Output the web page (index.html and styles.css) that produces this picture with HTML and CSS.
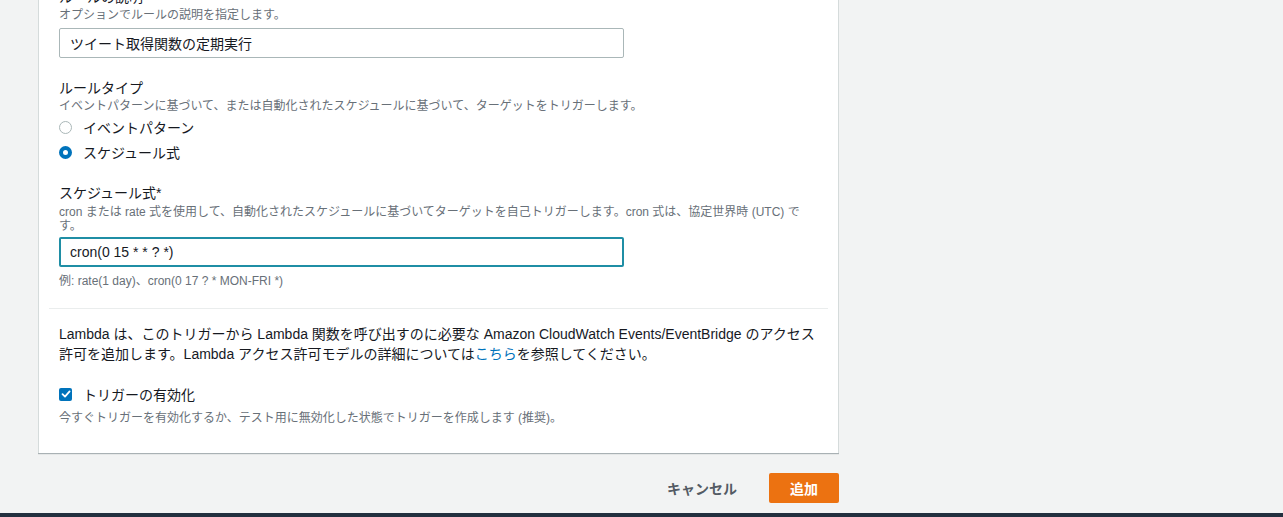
FILE: index.html
```html
<!DOCTYPE html>
<html lang="ja">
<head>
    <meta charset="UTF-8">
    <title>トリガーを追加</title>
    <link rel="stylesheet" href="styles.css">
</head>
<body>

<div class="page">
    <div class="card">
        <!-- rule settings -->
        <div class="section">
            <div class="field">
                <div class="label">ルールの説明</div>
                <div class="desc">オプションでルールの説明を指定します。</div>
                <input class="text-input" type="text" value="ツイート取得関数の定期実行">
            </div>

            <div class="field">
                <div class="label">ルールタイプ</div>
                <div class="desc">イベントパターンに基づいて、または自動化されたスケジュールに基づいて、ターゲットをトリガーします。</div>
                <div class="radio-row">
                    <span class="radio"></span>
                    <span>イベントパターン</span>
                </div>
                <div class="radio-row">
                    <span class="radio checked"></span>
                    <span>スケジュール式</span>
                </div>
            </div>

            <div class="field field-schedule">
                <div class="label">スケジュール式*</div>
                <div class="desc desc-tight">cron または rate 式を使用して、自動化されたスケジュールに基づいてターゲットを自己トリガーします。cron 式は、協定世界時 (UTC) です。</div>
                <input class="text-input focused" type="text" value="cron(0 15 * * ? *)">
                <div class="hint">例: rate(1 day)、cron(0 17 ? * MON-FRI *)</div>
            </div>
        </div>

        <!-- permissions -->
        <div class="section divided">
            <p class="note">Lambda は、このトリガーから Lambda 関数を呼び出すのに必要な Amazon CloudWatch Events/EventBridge のアクセス許可を追加します。Lambda アクセス許可モデルの詳細については<a href="#">こちら</a>を参照してください。</p>

            <div class="check-row">
                <span class="checkbox">
                    <svg width="10" height="10" viewBox="0 0 10 10"><path d="M1.5 5.2 L4 7.6 L8.6 2.4" fill="none" stroke="#fff" stroke-width="1.8" stroke-linecap="round" stroke-linejoin="round"/></svg>
                </span>
                <span>トリガーの有効化</span>
            </div>
            <div class="desc">今すぐトリガーを有効化するか、テスト用に無効化した状態でトリガーを作成します (推奨)。</div>
        </div>
    </div>

    <div class="actions">
        <button class="btn-link">キャンセル</button>
        <button class="btn-primary">追加</button>
    </div>
</div>

<div class="footer-bar"></div>

</body>
</html>
```

FILE: styles.css
```css
body {
    margin: 0;
    background-color: #f2f3f3;
    font-family: "Liberation Sans", "Noto Sans CJK JP", sans-serif;
    color: #16191f;
    font-size: 14px;
}

.page {
    width: 801px;
    margin-left: 38px;
    height: 513px;
    overflow: hidden;
}

.card {
    margin-top: -26px;
    background-color: #fff;
    padding: 0 10px 27px;
    border-left: 1px solid #d5dbdb;
    border-right: 1px solid #d5dbdb;
    box-shadow: 0 1px 1px 0 rgba(0, 28, 36, 0.3);
}

.section {
    padding: 0 10px;
}

.section.divided {
    border-top: 1px solid #eaeded;
    margin-top: 19px;
    padding-top: 15px;
}

.field {
    padding-top: 20px;
}

.field:first-child {
    padding-top: 13px;
}

.field-schedule {
    padding-top: 19px;
}

.label {
    font-size: 14px;
    line-height: 20px;
}

.desc {
    font-size: 12px;
    line-height: 16px;
    color: #687078;
}

.desc-tight {
    line-height: 14px;
    margin-top: 2px;
}

.text-input {
    display: block;
    box-sizing: border-box;
    width: 565px;
    height: 30px;
    margin-top: 5px;
    padding: 0 10px;
    border: 1px solid #aab7b8;
    border-radius: 2px;
    font-family: inherit;
    font-size: 14px;
    color: #16191f;
    outline: none;
}

.text-input.focused {
    border: 2px solid #1f8ea5;
    padding: 0 9px;
    margin-top: 4px;
}

.hint {
    font-size: 12px;
    line-height: 16px;
    margin-top: 6px;
    color: #687078;
}

.radio-row,
.check-row {
    display: flex;
    align-items: center;
    gap: 11px;
    height: 24px;
    margin-top: 1px;
}

.radio {
    box-sizing: border-box;
    width: 13px;
    height: 13px;
    border: 1px solid #aab7b8;
    border-radius: 50%;
}

.radio.checked {
    border: 4px solid #0073bb;
}

.note {
    margin: 0;
    font-size: 14px;
    line-height: 20px;
}

.note a {
    color: #0073bb;
    text-decoration: none;
}

.check-row {
    margin-top: 20px;
    height: 20px;
}

.checkbox {
    display: flex;
    align-items: center;
    justify-content: center;
    width: 13px;
    height: 13px;
    border-radius: 2px;
    background-color: #0073bb;
}

.check-row + .desc {
    margin-top: 6px;
}

.actions {
    display: flex;
    justify-content: flex-end;
    align-items: center;
    gap: 12px;
    margin-top: 20px;
}

.btn-link {
    background: none;
    border: none;
    padding: 0 20px;
    height: 30px;
    font-family: inherit;
    font-size: 14px;
    font-weight: bold;
    color: #545b64;
}

.btn-primary {
    width: 70px;
    height: 30px;
    border: none;
    border-radius: 2px;
    background-color: #ec7211;
    color: #fff;
    font-family: inherit;
    font-size: 14px;
    font-weight: bold;
}

.footer-bar {
    height: 4px;
    background-color: #232f3e;
}
```
